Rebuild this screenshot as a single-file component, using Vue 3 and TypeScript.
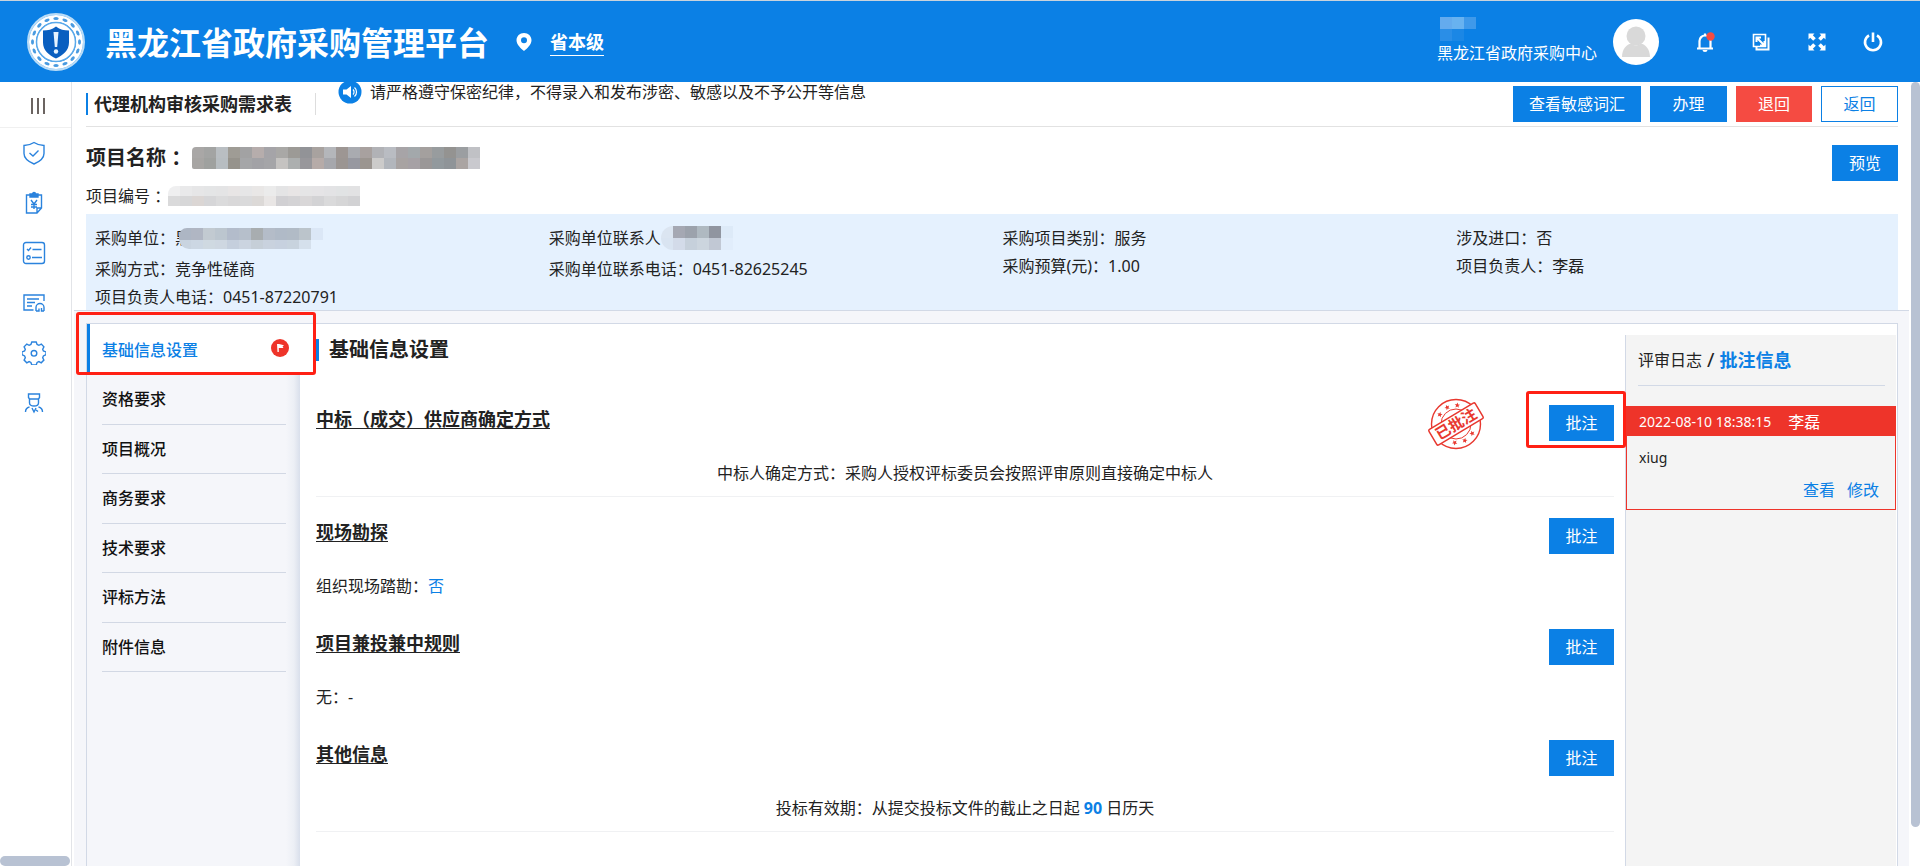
<script setup lang="ts">
interface Section {
  title: string
  text: string
  value?: string
  tail?: string
  centered: boolean
  marked: boolean
}

const navItems: string[] = ['资格要求', '项目概况', '商务要求', '技术要求', '评标方法', '附件信息']

const sections: Section[] = [
  { title: '中标（成交）供应商确定方式', text: '中标人确定方式：采购人授权评标委员会按照评审原则直接确定中标人', centered: true, marked: true },
  { title: '现场勘探', text: '组织现场踏勘：', value: '否', centered: false, marked: false },
  { title: '项目兼投兼中规则', text: '无：-', centered: false, marked: false },
  { title: '其他信息', text: '投标有效期：从提交投标文件的截止之日起', value: '90', tail: '日历天', centered: true, marked: false },
]

const nameMask: string[] = [
  '#a9a7a6', '#a3a4a3', '#b9bec2', '#9f9c95', '#a2a2a3', '#b6adac', '#a5a4a8', '#a9a8a6', '#9c9a96', '#929397', '#a8a29f', '#b4b6ba',
  '#9d9693', '#a9abb0', '#a8a19f', '#b1b2b6', '#b9bcc2', '#a7a4a7', '#a3a8ab', '#a4a09e', '#989c9e', '#949391', '#9b9ea1', '#c0c1c5',
  '#a7a5a3', '#9fa19f', '#b7bdc1', '#96938c', '#a5a6a8', '#a2a2a6', '#a5a5a8', '#c5c3c1', '#acafaf', '#98979b', '#b6aba8', '#a6a7ac',
  '#9b9592', '#9798a0', '#9b9590', '#cccbca', '#b2b6bc', '#a8a3a2', '#a6a1a5', '#9a9797', '#92999d', '#8f9498', '#aaa4a2', '#c9c9ce',
]
const codeMask: string[] = [
  '#efeff0', '#e9e9ea', '#e6e6e7', '#e4e5e6', '#e4e4e5', '#e8e5e5', '#e6e6e7', '#e9e7e6', '#ebebeb', '#e4e4e5', '#e8e5e5', '#e5e5e6', '#e5e4e6', '#e3e3e5', '#e1e3e4', '#e2e2e3',
  '#dadadb', '#d7d7d8', '#dbd6d4', '#d6d6d8', '#dbdbdc', '#d9d8d9', '#dadadb', '#dcd9d7', '#e9e6e5', '#d1d0d3', '#d4d3d5', '#d9d7d8', '#d3d3d5', '#dadadb', '#d6d6d7', '#d2d2d4',
]
const unitMask: string[] = [
  '#adb6c4', '#b0b6c3', '#c2cad1', '#bcc6cf', '#b3bccb', '#b6bfcb', '#a8adb0', '#b4bcc8', '#b0bac7', '#b1bbc6', '#bbc4cb', '#dbe7f6',
  '#c9d4e0', '#ccd7e3', '#cfd9e1', '#ced7e1', '#c5cfdd', '#cbd4e0', '#c6cfd8', '#c9d2de', '#c7d1df', '#c8d3de', '#d5e0ec', '#e5f1fe',
]
const contactMask: string[] = [
  '#dbe5f1', '#a5a8b3', '#9ca2ac', '#afb9c1', '#9095a0', '#ddeaf8',
  '#d9e4f1', '#d3dbe9', '#c6d0db', '#ccd5de', '#c1c8d4', '#e1edfb',
]
const userMask: string[] = ['#64abee', '#68b2f0', '#3f99ea', '#2a8ee7', '#1b87e5', '#0b80e5']

const beads: number[] = Array.from({ length: 16 }, (_, i) => i * 22.5)
const stampStars: number[] = [-32, 0, 32]
</script>

<template>
  <div class="page">
    <header class="header">
      <svg class="logo" viewBox="0 0 58 58" aria-hidden="true">
        <circle cx="29" cy="29" r="28" fill="none" stroke="#b9dcf7" stroke-width="2" />
        <circle cx="29" cy="29" r="23.500" fill="none" stroke="#fff" stroke-width="7" />
        <g v-for="a in beads" :key="a" :transform="`rotate(${a} 29 29)`">
          <ellipse cx="29" cy="5.500" rx="2.700" ry="1.500" fill="#4a9be0" />
        </g>
        <circle cx="29" cy="29" r="19.500" fill="#fff" stroke="#5aa9ea" stroke-width="1.500" />
        <path d="M29 13.500c4 3 8 4 13 4v12c0 8-6 12.500-13 16-7-3.500-13-8-13-16v-12c5 0 9-1 13-4z" fill="#0a5fc0" />
        <path d="M26.500 19h5l-1.300 15h-2.400z" fill="#e6f3ff" />
        <circle cx="29" cy="38.500" r="2.200" fill="#e6f3ff" />
      </svg>
      <h1 class="brand">黑龙江省政府采购管理平台</h1>
      <svg class="pin" viewBox="0 0 16 18" aria-hidden="true">
        <path d="M8 0C3.700 0 .500 3.200.500 7.200.500 11.500 5 15.500 8 18c3-2.500 7.500-6.500 7.500-10.800C15.500 3.200 12.300 0 8 0zm0 4.200a3 3 0 1 1 0 6 3 3 0 0 1 0-6z" fill="#fff" fill-rule="evenodd" />
      </svg>
      <a class="region" href="#">省本级</a>
      <div class="user">
        <div class="mask user-mask"><i v-for="(c, i) in userMask" :key="i" :style="{ backgroundColor: c }"></i></div>
        <span>黑龙江省政府采购中心</span>
      </div>
      <svg class="avatar" viewBox="0 0 46 46" aria-hidden="true">
        <circle cx="23" cy="23" r="23" fill="#fff" />
        <circle cx="23" cy="17" r="9.500" fill="#d9d9d9" />
        <path d="M9 38c0-8 5-13 9-13.500 3 2.500 7 2.500 10 0 4 .500 9 5.500 9 13.500z" fill="#d9d9d9" />
      </svg>
      <div class="tools">
        <button type="button" aria-label="消息">
          <svg viewBox="0 0 24 24"><path d="M6.500 18V11a5.500 5.500 0 0 1 11 0v7M4 18.500h16M12 5V3.500" fill="none" stroke="#fff" stroke-width="2.200" /><path d="M9.500 20h5a2.500 2 0 0 1-5 0z" fill="#fff" /><circle cx="17.500" cy="6.500" r="4.200" fill="#f54b42" /></svg>
        </button>
        <button type="button" aria-label="切换窗口">
          <svg viewBox="0 0 24 24" fill="none" stroke="#fff"><path d="M4.500 4.500h12v12h-12z" stroke-width="1.600" /><path d="M19.500 7.500v12h-12v-2.500" stroke-width="2" /><path d="M7.500 12V7.500H12M8 8l7 7M15.500 11v4.500H11" stroke-width="2" /></svg>
        </button>
        <button type="button" aria-label="全屏">
          <svg viewBox="0 0 24 24"><path d="M3.500 3.500h6L7.800 5.200l3 3-2.600 2.600-3-3-1.700 1.700zM20.500 3.500v6l-1.700-1.700-3 3-2.600-2.600 3-3-1.700-1.700zM3.500 20.500v-6l1.700 1.700 3-3 2.600 2.600-3 3 1.700 1.700zM20.500 20.500h-6l1.700-1.700-3-3 2.600-2.600 3 3 1.700-1.700z" fill="#fff" /></svg>
        </button>
        <button type="button" aria-label="退出">
          <svg viewBox="0 0 24 24" fill="none" stroke="#fff" stroke-width="2.600"><path d="M8 5.300a8 8 0 1 0 8 0M12 2.500v9.500" /></svg>
        </button>
      </div>
    </header>

    <div class="body">
      <aside class="sidebar">
        <button type="button" class="collapse" aria-label="折叠菜单"><i></i><i></i><i></i></button>
        <nav class="side-icons">
          <a href="#" aria-label="审核"><svg viewBox="0 0 24 24"><path d="M12 1.500c3 2 6 3 10 3v8c0 5-4 8-10 10.500C6 20.500 2 17.500 2 12.500v-8c4 0 7-1 10-3zM7.500 12l3.500 3 5.500-5.500" /></svg></a>
          <a href="#" aria-label="采购"><svg viewBox="0 0 24 24"><path d="M8 4H4.500v18H15l4.500-5V4H16M15 22v-5h4.500M9 9l3 4 3-4M12 13v5M9 13.500h6M9 16h6" /><path d="M8 3h2.500a1.500 1.500 0 0 1 3 0H16v3H8z" fill="#2b83dd" /></svg></a>
          <a href="#" aria-label="清单"><svg viewBox="0 0 24 24"><rect x="1.500" y="1.500" width="21" height="21" rx="2.500" /><path d="M5 8l1.500 1.500L9 6.500M10.500 8.500h9M10 16.500h10" /><circle cx="6.500" cy="16.500" r="1.700" /></svg></a>
          <a href="#" aria-label="证书"><svg viewBox="0 0 24 24"><path d="M11.500 19H2V4h20v6M5 8h12M5 11.500h8M5 15h5M14 20v-3.500a4 4 0 1 1 8 0V20M14 20h3v-2.500M22 20h-2.500v-3" /></svg></a>
          <a href="#" aria-label="设置"><svg viewBox="0 0 24 24"><path d="M9.800 1h4.400l.9 2.500 1.800.800 2.400-1.200 2.600 2.700-1.200 2.400.7 1.800 2.600.900v2.800l-2.600 1.200-.7 1.800 1.200 2.400-2.700 2.700-2.300-1.200-1.800.8-.9 2.600H9.800l-.9-2.600-1.800-.8-2.300 1.200-2.700-2.700 1.200-2.400-.7-1.800L0 13.700v-2.800l2.600-.9.700-1.800-1.200-2.400 2.700-2.700 2.300 1.200 1.800-.8z" /><circle cx="12" cy="12.300" r="2.800" /></svg></a>
          <a href="#" aria-label="专家"><svg viewBox="0 0 24 24"><path d="M6.500 3h11v3.500l-1 1.500v4c0 2-2 3-4.500 3s-4.500-1-4.500-3V8l-1-1.500zM7.500 8h9M3.500 21c0-3 1.500-4.500 4-5M20.500 21c0-3-1.500-4.500-4-5M10 17l2 4 2-4M14 19l2 1.500" /></svg></a>
        </nav>
        <div class="side-thumb"></div>
      </aside>

      <main class="main">
        <section class="summary">
          <div class="topbar">
            <h2 class="page-title">代理机构审核采购需求表</h2>
            <div class="notice">
              <svg viewBox="0 0 24 24" aria-hidden="true"><circle cx="12" cy="12" r="11.500" fill="#0b80e5" /><path d="M5 9.500h3.500L13 6v12l-4.500-3.500H5z" fill="#fff" /><path d="M15 9.500a3.500 3.500 0 0 1 0 5M16.500 7.500a6 6 0 0 1 0 9" fill="none" stroke="#fff" stroke-width="1.200" /></svg>
              <span>请严格遵守保密纪律，不得录入和发布涉密、敏感以及不予公开等信息</span>
            </div>
            <div class="actions">
              <button type="button" class="btn">查看敏感词汇</button>
              <button type="button" class="btn wide">办理</button>
              <button type="button" class="btn wide danger">退回</button>
              <button type="button" class="btn wide plain">返回</button>
            </div>
          </div>

          <div class="project">
            <div>
              <div class="name-row">
                <strong>项目名称 ：</strong>
                <div class="mask name-mask"><i v-for="(c, i) in nameMask" :key="i" :style="{ backgroundColor: c }"></i></div>
              </div>
              <div class="code-row">
                <span>项目编号 ：</span>
                <div class="mask code-mask"><i v-for="(c, i) in codeMask" :key="i" :style="{ backgroundColor: c }"></i></div>
              </div>
            </div>
            <button type="button" class="btn preview">预览</button>
          </div>

          <div class="facts">
            <div class="fact-col">
              <div class="fact masked">采购单位：黑
                <div class="mask unit-mask"><i v-for="(c, i) in unitMask" :key="i" :style="{ backgroundColor: c }"></i></div>
              </div>
              <div class="fact">采购方式：竞争性磋商</div>
              <div class="fact">项目负责人电话：0451-87220791</div>
            </div>
            <div class="fact-col">
              <div class="fact masked">采购单位联系人
                <div class="mask contact-mask"><i v-for="(c, i) in contactMask" :key="i" :style="{ backgroundColor: c }"></i></div>
              </div>
              <div class="fact">采购单位联系电话：0451-82625245</div>
            </div>
            <div class="fact-col">
              <div class="fact">采购项目类别：服务</div>
              <div class="fact">采购预算(元)：1.00</div>
            </div>
            <div class="fact-col">
              <div class="fact">涉及进口：否</div>
              <div class="fact">项目负责人：李磊</div>
            </div>
          </div>
        </section>

        <section class="workspace">
          <div class="card">
            <nav class="steps">
              <a class="step-active" href="#">
                基础信息设置
                <svg viewBox="0 0 18 18" aria-hidden="true"><circle cx="9" cy="9" r="9" fill="#ee342a" /><path d="M6 5h2l5 1.200-1.500 1.300L12.500 9H7.800v4H6.500z" fill="#fff" /></svg>
                <span class="highlight nav-highlight"></span>
              </a>
              <div class="step-list">
                <a v-for="item in navItems" :key="item" href="#">{{ item }}</a>
              </div>
            </nav>

            <div class="content">
              <h3 class="content-title">基础信息设置</h3>
              <section v-for="s in sections" :key="s.title" class="block" :class="{ ruled: s.centered }">
                <div class="block-head">
                  <h4>{{ s.title }}</h4>
                  <svg v-if="s.marked" class="stamp" viewBox="0 0 60 52" aria-hidden="true">
                    <g fill="none" stroke="#e8382f">
                      <circle cx="30" cy="26" r="24.500" stroke-width="1.400" />
                      <circle cx="30" cy="26" r="15" stroke-width="1" />
                    </g>
                    <g v-for="a in stampStars" :key="a" fill="#e8382f">
                      <path :transform="`rotate(${a - 28} 30 26)`" d="M30 4.500l.8 1.800 1.900.1-1.500 1.200.5 1.900-1.700-1-1.700 1 .5-1.900-1.500-1.200 1.900-.1z" />
                      <path :transform="`rotate(${a + 152} 30 26)`" d="M30 4.500l.8 1.800 1.900.1-1.500 1.200.5 1.900-1.700-1-1.700 1 .5-1.900-1.500-1.200 1.900-.1z" />
                    </g>
                    <g transform="rotate(-31 30 26)">
                      <rect x="3" y="17" width="54" height="18" rx="1.500" fill="#fff" stroke="#e8382f" stroke-width="1.500" />
                      <text x="30" y="31.500" text-anchor="middle" font-size="15" font-weight="700" fill="#e8382f">已批注</text>
                    </g>
                  </svg>
                  <div class="mark">
                    <button type="button" class="btn">批注</button>
                    <span v-if="s.marked" class="highlight btn-highlight"></span>
                  </div>
                </div>
                <p class="block-text" :class="{ centered: s.centered }">{{ s.text }}<span v-if="s.value" class="value" :class="{ number: s.tail }">{{ s.value }}</span>{{ s.tail }}</p>
              </section>
            </div>

            <aside class="log">
              <div class="log-tabs">
                <a href="#">评审日志</a><i>/</i><a class="current" href="#">批注信息</a>
              </div>
              <article class="note">
                <header><time>2022-08-10 18:38:15</time><span>李磊</span></header>
                <p>xiug</p>
                <footer><a href="#">查看</a><a href="#">修改</a></footer>
              </article>
            </aside>
          </div>
        </section>
      </main>
      <div class="scroll-track"><div class="scroll-thumb"></div></div>
    </div>
  </div>
</template>

<style>
body {
  margin: 0;
  overflow: hidden;
}
</style>

<style scoped>
.page {
  display: flex;
  flex-direction: column;
  height: 100vh;
  overflow: hidden;
  background: #fff;
  color: #222;
  font: 16px/24px "Noto Sans", "Noto Sans CJK SC", sans-serif;
}
.page * { box-sizing: border-box; }
a { color: inherit; text-decoration: none; }
h1, h2, h3, h4, p { margin: 0; }
button { font: inherit; cursor: pointer; }
svg { display: block; flex: none; }

.header {
  display: flex;
  align-items: center;
  flex: none;
  height: 82px;
  padding: 0 35px 0 27px;
  border-top: 1px solid #c9d3dc;
  background: #0b80e5;
  color: #fff;
}
.logo { width: 58px; height: 58px; }
.brand { margin-left: 20px; padding-top: 2px; font-size: 32px; line-height: 48px; white-space: nowrap; }
.pin { width: 16px; height: 18px; margin-left: 27px; }
.region { margin-left: 18px; padding-top: 2px; border-bottom: 1px solid #fff; font-size: 18px; line-height: 26px; font-weight: 700; }
.user { margin-left: auto; padding-bottom: 1px; white-space: nowrap; }
.avatar { width: 46px; height: 46px; margin-left: 16px; }
.tools { display: flex; gap: 32px; margin-left: 34px; }
.tools button { width: 24px; height: 24px; padding: 0; border: 0; background: none; }

.mask { display: grid; flex: none; overflow: hidden; }
.user-mask { grid-template: repeat(2, 12px) / repeat(3, 12px); margin-left: 3px; }
.name-mask { grid-template: repeat(2, 11px) / repeat(24, 12px); border-radius: 4px 0 0 2px; }
.code-mask { grid-template: repeat(2, 10px) / repeat(16, 12px); border-radius: 8px 0 0 0; }
.unit-mask { grid-template: 12px 9px / repeat(12, 12px); margin-left: -12px; border-radius: 8px 0 0 10px; }
.contact-mask { grid-template: repeat(2, 12px) / repeat(6, 12px); border-radius: 12px 0 0 12px; }

.body { display: flex; flex: 1; min-height: 0; }
.sidebar { display: flex; flex-direction: column; flex: none; width: 72px; border-right: 1px solid #e2e4e8; }
.collapse {
  display: flex;
  justify-content: center;
  align-items: center;
  gap: 4px;
  flex: none;
  height: 46px;
  padding: 3px 0 0 5px;
  border: 0;
  border-bottom: 1px solid #f0f0f0;
  background: none;
}
.collapse i { width: 2px; height: 16px; background: #6b6461; }
.side-icons { display: flex; flex-direction: column; flex: 1; padding-right: 3px; }
.side-icons a { display: flex; align-items: center; justify-content: center; height: 50px; }
.side-icons svg { width: 24px; height: 24px; fill: none; stroke: #2b83dd; stroke-width: 1.4; }
.side-thumb { flex: none; width: 70px; height: 10px; border-radius: 5px; background: #b8c2d3; }

.main { display: flex; flex-direction: column; flex: 1; min-width: 0; margin-left: 2px; }
.summary { flex: none; padding: 0 11px 0 12px; border-bottom: 1px solid #d2d9e6; }
.topbar { display: flex; height: 45px; border-bottom: 1px solid #e2e2e2; }
.page-title {
  height: 22px;
  margin-top: 11px;
  padding: 0 23px 0 6px;
  border-left: 2px solid #0b80e5;
  border-right: 1px solid #ddd;
  font-size: 18px;
  line-height: 22px;
  white-space: nowrap;
}
.notice { display: flex; align-items: center; gap: 8px; height: 20px; margin-left: 22px; white-space: nowrap; }
.notice svg { width: 24px; height: 24px; }
.actions { display: flex; gap: 9px; margin: 4px 0 0 auto; }
.btn { height: 36px; padding: 0 15px; border: 1px solid #0b80e5; background: #0b80e5; color: #fff; line-height: 32px; white-space: nowrap; }
.wide { width: 77px; }
.danger { width: 76px; border-color: #f54b42; background: #f54b42; }
.plain { background: #fff; color: #0b80e5; }
.preview { width: 66px; }
.project { display: flex; justify-content: space-between; height: 87px; padding-top: 18px; }
.name-row { display: flex; align-items: center; gap: 3px; height: 26px; }
.name-row strong { width: 103px; font-size: 20px; white-space: nowrap; }
.code-row { display: flex; align-items: center; height: 50px; white-space: nowrap; }
.code-row span { width: 82px; }

.facts { display: grid; grid-template-columns: repeat(4, 1fr); column-gap: 12px; height: 96px; padding: 10px 0 0 9px; background: #e5f1fe; }
.fact { display: flex; height: 28px; line-height: 28px; white-space: nowrap; }
.masked { align-items: center; margin-bottom: 3px; }

.workspace { display: flex; flex: 1; min-height: 0; padding: 12px 11px 0 12px; background: #f5f6fa; }
.card { display: flex; flex: 1; min-width: 0; border: 1px solid #d2d9e6; border-bottom: 0; background: #fff; }
.steps { flex: none; width: 213px; background: linear-gradient(to left, #d9dfeb, #eceff5 6px, #f5f6fa 14px); }
.step-active {
  display: flex;
  align-items: center;
  justify-content: space-between;
  position: relative;
  height: 51px;
  padding: 0 11px 0 12px;
  border-left: 3px solid #0b80e5;
  background: #fff;
  color: #0b80e5;
  font-weight: 500;
}
.step-active svg { width: 18px; height: 18px; margin-bottom: 3px; }
.step-list { display: grid; grid-auto-rows: 1fr; height: 297px; padding: 0 14px 0 15px; }
.step-list a { display: flex; align-items: center; border-bottom: 1px solid #d2d8e4; color: #111; font-weight: 500; }
.highlight { position: absolute; border: 3px solid #ff2014; border-radius: 3px; pointer-events: none; z-index: 2; }
.nav-highlight { left: -14px; top: -12px; width: 240px; height: 63px; }
.btn-highlight { left: -23px; top: -14px; width: 100px; height: 57px; }

.content { flex: 1; min-width: 0; padding: 15px 11px 0 16px; }
.content-title { margin-bottom: 44px; padding-left: 10px; border-left: 3px solid #0b80e5; font-size: 20px; line-height: 22px; }
.block { height: 90px; margin-bottom: 21px; }
.ruled { height: 92px; border-bottom: 1px solid #f0f1f3; }
.block-head { display: flex; align-items: flex-start; height: 36px; }
.block-head h4 { margin-right: auto; font-size: 18px; line-height: 28px; text-decoration: underline; text-underline-offset: 2px; }
.stamp { width: 60px; height: 52px; margin: -7px 63px 0 0; }
.mark { position: relative; }
.mark .btn { display: block; width: 65px; }
.block-text { padding-top: 20px; }
.centered { text-align: center; }
.value { color: #0b80e5; }
.number { margin: 0 4px; font-weight: 700; }

.log { flex: none; width: 271px; margin: 11px 1px 0 0; border-left: 1px solid #d2d9e6; background: #f4f4f4; }
.log-tabs { display: flex; align-items: center; height: 51px; margin: 0 11px 20px 12px; border-bottom: 1px solid #d2d9e6; }
.log-tabs i { margin: 0 5px; font-size: 20px; font-style: normal; }
.current { color: #0b80e5; font-size: 18px; font-weight: 700; }
.note { height: 104px; border: 1px solid #ee342a; }
.note header { display: flex; align-items: center; gap: 17px; height: 29px; padding-left: 12px; background: #ee342a; color: #fff; }
.note time, .note p { font-size: 14px; }
.note p { padding: 10px 12px 8px; }
.note footer { display: flex; justify-content: flex-end; gap: 12px; padding-right: 16px; color: #0b80e5; }

.scroll-track { flex: none; width: 11px; padding-left: 2px; }
.scroll-thumb { height: 95%; border-radius: 5px; background: #b8c2d3; }
</style>
